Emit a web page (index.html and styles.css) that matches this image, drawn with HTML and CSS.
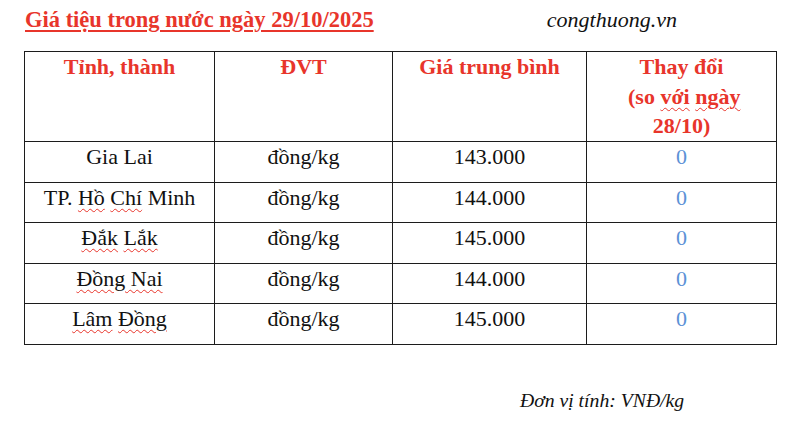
FILE: index.html
```html
<!DOCTYPE html>
<html lang="vi">
<head>
<meta charset="utf-8">
<link rel="stylesheet" href="styles.css">
</head>
<body>
<div class="page">
  <div class="top">
    <h1 class="title">Giá tiệu trong nước ngày 29/10/2025</h1>
    <div class="site">congthuong.vn</div>
  </div>
  <table class="prices">
    <colgroup>
      <col class="c1"><col class="c2"><col class="c3"><col class="c4">
    </colgroup>
    <thead>
      <tr>
        <th>Tỉnh, thành</th>
        <th>ĐVT</th>
        <th>Giá trung bình</th>
        <th>Thay đổi<br>&nbsp;(so <span class="sp">với</span> <span class="sp">ngày</span><br>28/10)</th>
      </tr>
    </thead>
    <tbody>
      <tr><td>Gia Lai</td><td>đồng/kg</td><td>143.000</td><td class="chg">0</td></tr>
      <tr><td>TP. <span class="sp">Hồ</span> <span class="sp">Chí</span> Minh</td><td>đồng/kg</td><td>144.000</td><td class="chg">0</td></tr>
      <tr><td><span class="sp">Đắk</span> <span class="sp">Lắk</span></td><td>đồng/kg</td><td>145.000</td><td class="chg">0</td></tr>
      <tr><td><span class="sp">Đồng Nai</span></td><td>đồng/kg</td><td>144.000</td><td class="chg">0</td></tr>
      <tr><td><span class="sp">Lâm</span> <span class="sp">Đồng</span></td><td>đồng/kg</td><td>145.000</td><td class="chg">0</td></tr>
    </tbody>
  </table>
  <div class="unit">Đơn vị tính: VNĐ/kg</div>
</div>
</body>
</html>
```
FILE: styles.css
```css
html, body {
  margin: 0;
  padding: 0;
  background: #ffffff;
}
body {
  font-family: "Liberation Serif", "Times New Roman", serif;
  color: #111111;
  width: 800px;
  height: 430px;
  overflow: hidden;
}
.page {
  padding: 5px 0 0 24px;
}
.top {
  display: flex;
  align-items: baseline;
  height: 46px;
}
.title {
  margin: 0 0 0 1px;
  font-size: 22.5px;
  font-weight: bold;
  color: #e8352b;
  text-decoration: underline;
  text-decoration-thickness: 2px;
  text-underline-offset: 3px;
  line-height: 30px;
}
.site {
  margin-left: auto;
  margin-right: 123px;
  font-size: 22px;
  font-style: italic;
  line-height: 30px;
}
.prices {
  border-collapse: collapse;
  table-layout: fixed;
  width: 752px;
}
.c1 { width: 190px; }
.c2 { width: 178px; }
.c3 { width: 194px; }
.c4 { width: 190px; }
.prices th, .prices td {
  border: 1px solid #1c1c1c;
  text-align: center;
  vertical-align: top;
  font-size: 22px;
  padding: 0;
}
.prices th {
  color: #e8352b;
  font-weight: bold;
  line-height: 29.5px;
  height: 89px;
}
.prices td {
  font-weight: normal;
  line-height: 25px;
  padding: 2px 0 12.5px;
}
.prices td.chg {
  color: #5b91d6;
}
.sp {
  text-decoration: underline wavy #e8352b;
  text-decoration-thickness: 1px;
  text-underline-offset: 3px;
}
.unit {
  margin: 43px 0 0 496px;
  font-size: 19.7px;
  font-style: italic;
  line-height: 24px;
}
```
